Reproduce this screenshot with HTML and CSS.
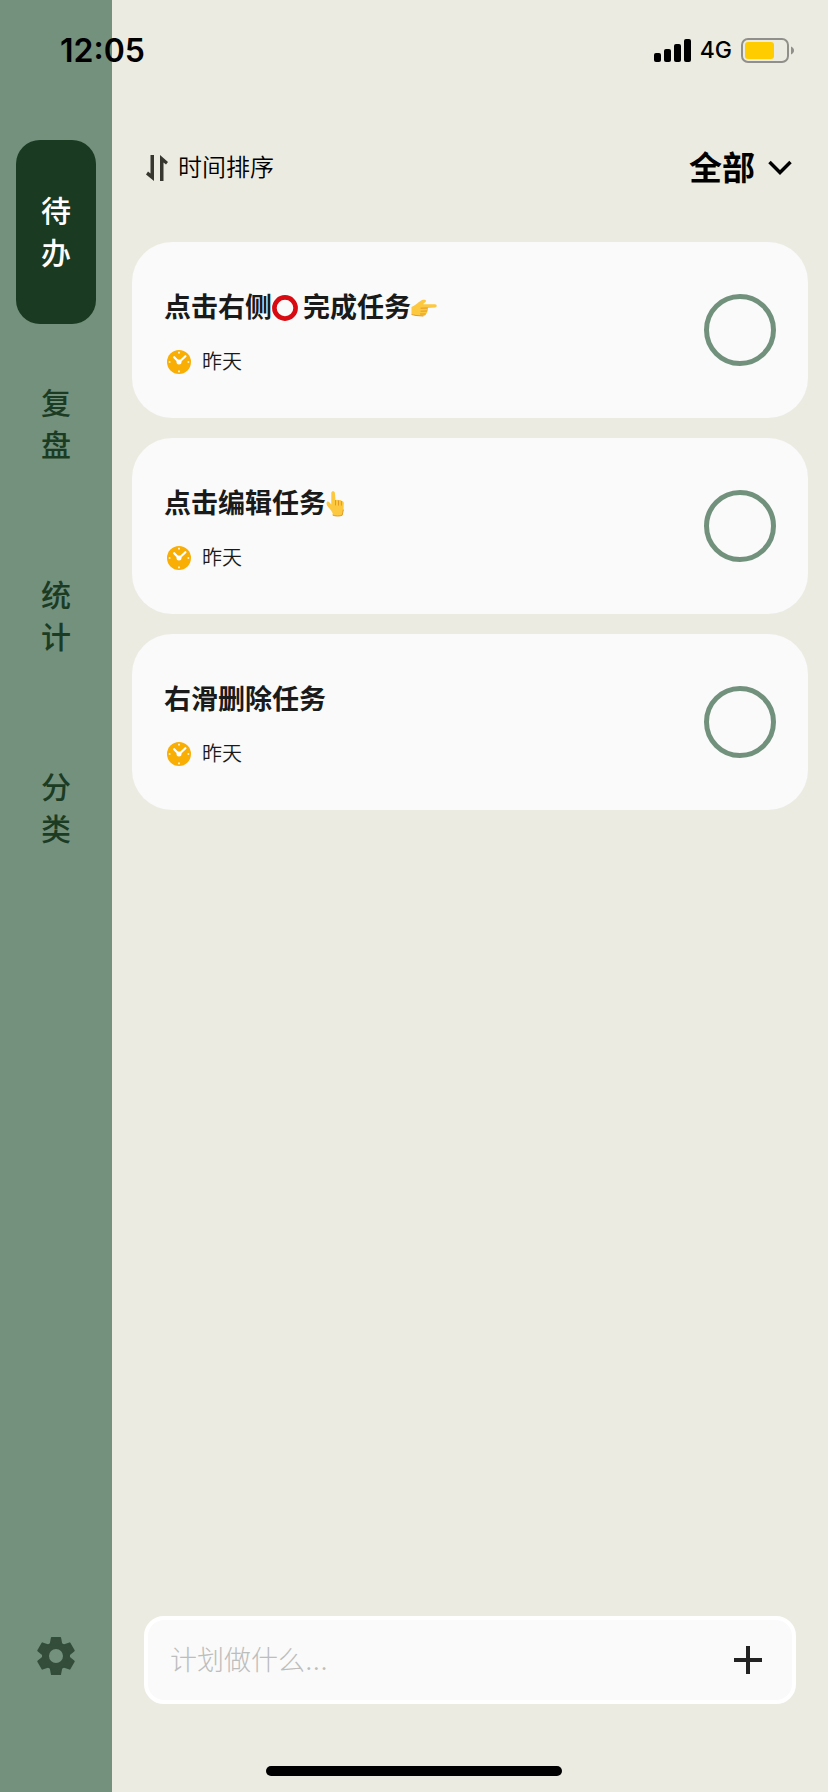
FILE: index.html
```html
<!DOCTYPE html>
<html lang="zh-CN">
<head>
    <meta charset="UTF-8">
    <title>待办</title>
    <meta name="viewport" content="width=device-width, initial-scale=1.0">
    <link rel="stylesheet" href="styles.css">
</head>
<body>
    <!-- shared icons -->
    <svg class="sprite" aria-hidden="true">
        <symbol id="clock" viewBox="0 0 24 24">
            <circle cx="12" cy="12" r="12" fill="#f8ae05"/>
            <path d="M7.2 7.2L12 12.2L18.4 6.2" fill="none" stroke="#fff" stroke-width="2.200" stroke-linecap="round" stroke-linejoin="round"/>
            <circle cx="12" cy="12" r="2.500" fill="#fff"/>
            <path d="M12 1.800v1.600M12 20.600v1.600M1.800 12h1.600M20.600 12h1.600" stroke="#fff" stroke-width="1.600"/>
        </symbol>
    </svg>

    <div class="status-bar">
        <span class="time">12:05</span>
        <div class="signals">
            <svg width="37" height="23" viewBox="0 0 37 23">
                <rect x="0" y="14" width="7" height="9" rx="2"/>
                <rect x="10" y="10" width="7" height="13" rx="2"/>
                <rect x="20" y="5" width="7" height="18" rx="2"/>
                <rect x="30" y="0" width="7" height="23" rx="2"/>
            </svg>
            <span class="network">4G</span>
            <svg width="53" height="25" viewBox="0 0 53 25">
                <rect x="1" y="1" width="46" height="23" rx="6" fill="none" stroke="#918f89" stroke-width="2"/>
                <rect x="4" y="4" width="29" height="17" rx="3" fill="#ffcc00"/>
                <path d="M50 8.500c4 1.500 4 6.500 0 8z" fill="#918f89"/>
            </svg>
        </div>
    </div>

    <div class="app">
        <nav class="sidebar">
            <a class="tab active" href="#todo">待<br>办</a>
            <a class="tab" href="#review">复<br>盘</a>
            <a class="tab" href="#stats">统<br>计</a>
            <a class="tab" href="#category">分<br>类</a>
            <button class="settings" aria-label="设置">
                <svg width="40" height="40" viewBox="-20 -20 40 40">
                    <circle r="10.500" fill="none" stroke="#334d3a" stroke-width="7"/>
                    <g fill="#334d3a" stroke="#334d3a" stroke-width="1.500" stroke-linejoin="round">
                        <path id="tooth" d="M-5.500 -12L-4.300 -18.300H4.300L5.500 -12z"/>
                        <use href="#tooth" transform="rotate(60)"/>
                        <use href="#tooth" transform="rotate(120)"/>
                        <use href="#tooth" transform="rotate(180)"/>
                        <use href="#tooth" transform="rotate(240)"/>
                        <use href="#tooth" transform="rotate(300)"/>
                    </g>
                </svg>
            </button>
        </nav>

        <main class="content">
            <header class="toolbar">
                <button class="sort">
                    <svg width="22" height="26" viewBox="0 0 22 26">
                        <path d="M8 0V26L0 19.500L2 16.500L4.500 18.500V0zM14 26V0L22 7L20 9.500L17.500 7.500V26z" fill="#37372f"/>
                    </svg>
                    时间排序
                </button>
                <label class="filter">
                    <select aria-label="分类筛选">
                        <option>全部</option>
                    </select>
                    <svg width="24" height="16" viewBox="0 0 24 16">
                        <path d="M1.500 2L12 12.500L22.500 2" fill="none" stroke="#000" stroke-width="3.500"/>
                    </svg>
                </label>
            </header>

            <ul class="tasks">
                <li class="task">
                    <div class="info">
                        <label class="title" for="task1">点击右侧<svg class="ring" width="26" height="26" viewBox="0 0 26 26"><circle cx="13" cy="13" r="10.600" fill="none" stroke="#d80a12" stroke-width="4.600"/></svg>完成任务<svg width="26" height="26" viewBox="0 0 26 26">
                            <path d="M0.500 12C4 10.500 6.500 8 9.500 6C11 4.800 14.500 4.300 15 5.800C15.300 7 13 8 12.200 9.200H24C26.300 9.200 26.300 12.400 24 12.500L16.500 13C17.500 14 17.200 15.500 16 16C16.400 17.500 15.800 18.600 14.700 19C14.500 20.500 13.500 21 12 21L5 20.500C3 20 2 19.500 0.500 19.500z" fill="#fcc840"/>
                            <path d="M10 13.200L16.500 13M10 16.200L16 16M9.500 19L14.500 19M1 19.600L5 20.500L12 21" fill="none" stroke="#e29a25" stroke-width="1" stroke-linecap="round"/>
                        </svg></label>
                        <div class="date"><svg width="24" height="24"><use href="#clock"/></svg>昨天</div>
                    </div>
                    <input type="checkbox" class="check" id="task1">
                </li>
                <li class="task">
                    <div class="info">
                        <label class="title" for="task2">点击编辑任务<svg width="26" height="26" viewBox="0 0 26 26">
                            <path d="M5.300 2C5.300 -0.200 8.800 -0.200 8.900 2L9.500 9.300C10.300 8.300 12 8.500 12.500 9.400C13.500 8.700 15 9 15.400 10C16.800 9.700 17.800 10.500 17.800 12L17.500 18.500C17.200 20.500 16.500 21.500 16.300 23V24C16.200 25.300 7 25.300 6.800 24V22.500C5.500 19.500 3.500 17.500 1.800 15.500C0.200 13.500 0.300 11 1.300 10.500C2.700 10 4 12 5.300 13.500z" fill="#fcc840"/>
                            <path d="M9.500 9.500V14M12.500 9.700V14.200M15.400 10.300V14.200M7 24.200C9 25.300 14 25.300 16.200 24.200L17.300 19" fill="none" stroke="#e29a25" stroke-width="1" stroke-linecap="round"/>
                        </svg></label>
                        <div class="date"><svg width="24" height="24"><use href="#clock"/></svg>昨天</div>
                    </div>
                    <input type="checkbox" class="check" id="task2">
                </li>
                <li class="task">
                    <div class="info">
                        <label class="title" for="task3">右滑删除任务</label>
                        <div class="date"><svg width="24" height="24"><use href="#clock"/></svg>昨天</div>
                    </div>
                    <input type="checkbox" class="check" id="task3">
                </li>
            </ul>

            <form class="composer">
                <input type="text" placeholder="计划做什么..." aria-label="计划做什么">
                <button type="button" aria-label="添加">
                    <svg width="28" height="28" viewBox="0 0 28 28">
                        <path d="M14 0V28M0 14H28" stroke="#222" stroke-width="4"/>
                    </svg>
                </button>
            </form>
        </main>
    </div>

    <div class="home-indicator"></div>
</body>
</html>
```
FILE: styles.css
```css
* {
    box-sizing: border-box;
}
body {
    margin: 0;
    position: relative;
    font-family: Inter, "Noto Sans CJK SC", sans-serif;
    background-color: #ecebe2;
    color: #1a1a1a;
}
button, input, select {
    font-family: inherit;
    color: inherit;
    margin: 0;
    padding: 0;
    border: none;
    background: none;
}
button {
    cursor: pointer;
}
svg {
    display: block;
    flex-shrink: 0;
}
.sprite {
    position: absolute;
    width: 0;
    height: 0;
}

/* status bar */
.status-bar {
    position: absolute;
    top: 0;
    left: 0;
    right: 0;
    height: 100px;
    padding: 0 34px 0 60px;
    display: flex;
    align-items: center;
    justify-content: space-between;
    color: #000;
}
.time {
    font-size: 32px;
    font-weight: 600;
}
.signals {
    display: flex;
    align-items: center;
    gap: 9px;
}
.network {
    font-size: 23px;
    font-weight: 500;
}

.app {
    display: flex;
    min-height: 100vh;
}

/* sidebar */
.sidebar {
    width: 112px;
    flex-shrink: 0;
    padding: 140px 16px 116px;
    display: flex;
    flex-direction: column;
    gap: 8px;
    background-color: #73917d;
}
.tab {
    height: 184px;
    display: flex;
    align-items: center;
    justify-content: center;
    border-radius: 24px;
    font-size: 30px;
    line-height: 42px;
    font-weight: 500;
    color: #1b3c23;
    text-decoration: none;
}
.tab.active {
    background-color: #1b3a22;
    color: #fff;
}
.settings {
    margin: auto auto 0;
}

/* content */
.content {
    flex: 1;
    min-width: 0;
    padding: 140px 20px 88px;
    display: flex;
    flex-direction: column;
}
.toolbar {
    height: 56px;
    margin-bottom: 46px;
    padding: 0 16px 0 14px;
    display: flex;
    align-items: center;
    justify-content: space-between;
    color: #000;
}
.sort {
    display: flex;
    align-items: center;
    gap: 10px;
    font-size: 24px;
    line-height: 32px;
    font-weight: 350;
}
.filter {
    display: flex;
    align-items: center;
    gap: 13px;
}
.filter select {
    appearance: none;
    font-size: 33px;
    font-weight: 700;
}

.tasks {
    list-style: none;
    margin: 0;
    padding: 0;
    display: flex;
    flex-direction: column;
    gap: 20px;
}
.task {
    height: 176px;
    padding: 0 32px;
    display: flex;
    align-items: center;
    justify-content: space-between;
    border-radius: 40px;
    background-color: #f9faf9;
}
.info {
    display: flex;
    flex-direction: column;
    gap: 22px;
    padding-top: 5px;
}
.title {
    display: flex;
    align-items: center;
    font-size: 27px;
    line-height: 36px;
    font-weight: 700;
}
.ring {
    margin-right: 5px;
}
.date {
    display: flex;
    align-items: center;
    gap: 11px;
    padding-left: 3px;
    font-size: 20px;
    line-height: 28px;
    font-weight: 350;
}
.check {
    appearance: none;
    width: 72px;
    height: 72px;
    border: 5px solid #72917d;
    border-radius: 50%;
}
.check:checked {
    background-color: #72917d;
}

.composer {
    margin: auto 12px 0;
    height: 88px;
    padding: 0 30px 0 22px;
    display: flex;
    align-items: center;
    border: 4px solid #fff;
    border-radius: 20px;
    background-color: #f9faf9;
}
.composer input {
    flex: 1;
    min-width: 0;
    font-size: 27px;
    font-weight: 300;
    outline: none;
}
.composer input::placeholder {
    color: #bdbdbd;
}

.home-indicator {
    position: absolute;
    left: 50%;
    bottom: 16px;
    width: 296px;
    height: 10px;
    margin-left: -148px;
    border-radius: 5px;
    background-color: #000;
}
```
